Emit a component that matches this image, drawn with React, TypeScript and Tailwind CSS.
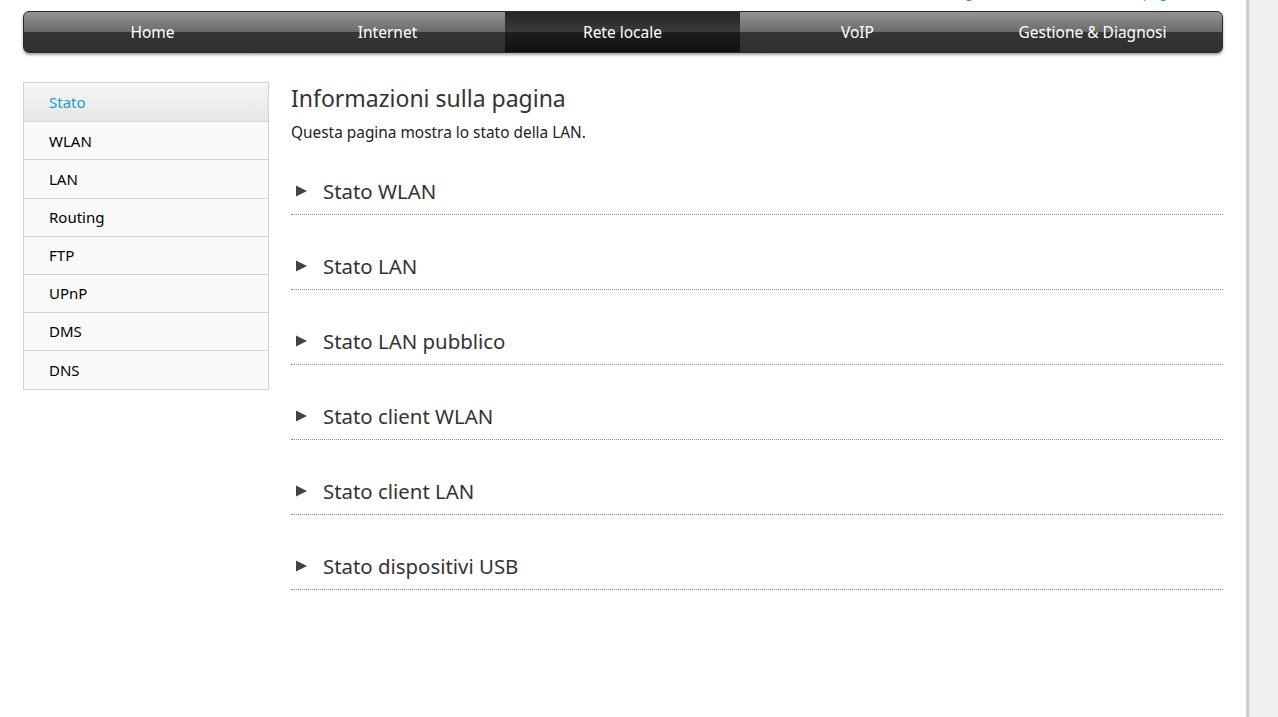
import { useState } from "react";

const tabs = ["Home", "Internet", "Rete locale", "VoIP", "Gestione & Diagnosi"];
const menu = ["Stato", "WLAN", "LAN", "Routing", "FTP", "UPnP", "DMS", "DNS"];
const sections = [
	"Stato WLAN",
	"Stato LAN",
	"Stato LAN pubblico",
	"Stato client WLAN",
	"Stato client LAN",
	"Stato dispositivi USB",
];

function Tab({ label, active }: { label: string; active: boolean }) {
	return (
		<div
			className={
				active
					? "flex h-full w-[235px] items-center justify-center bg-[linear-gradient(#262626_0%,#3a3a3a_50%,#1e1e1e_51%,#101010_100%)] pt-[2px] text-white"
					: "flex h-full w-[235px] items-center justify-center pt-[2px] text-white"
			}
		>
			{label}
		</div>
	);
}

export default function App() {
	const [current, setCurrent] = useState("Stato");
	return (
		<div className="flex min-h-[717px] bg-[#f0f0f0] font-['Noto_Sans',sans-serif]">
			<div className="w-[1246px] shrink-0 bg-white">
				<div className="-mt-[17px] flex h-[18px] justify-end gap-[110px] overflow-hidden pr-[58px] text-[14px] leading-[18px] text-[#1a9bd7]">
					<span>Cambia lingua</span>
					<span>Guida pagina</span>
				</div>
				<nav className="mx-[23px] mt-[10px] flex h-[42px] rounded-[6px] border border-[#2a2a2a] bg-[linear-gradient(#949494_0%,#6a6a6a_50%,#353535_51%,#303030_100%)] px-[11px] text-[15.5px] shadow-[0_2px_3px_rgba(0,0,0,0.35)]">
					{tabs.map((t) => (
						<Tab key={t} label={t} active={t === "Rete locale"} />
					))}
				</nav>
				<div className="mt-[29px] flex px-[23px]">
					<ul className="w-[246px] shrink-0 self-start border border-[#d4d4d4] bg-[#fafafa]">
						{menu.map((m, i) => (
							<li
								key={m}
								onClick={() => setCurrent(m)}
								className={
									(i > 0 ? "border-t border-[#d4d4d4] " : "") +
									(m === current
										? "flex h-[38.2px] cursor-pointer items-center bg-[linear-gradient(#f6f6f6,#e6e6e6)] pl-[25px] text-[15px] text-[#1a9bd7]"
										: "flex h-[38.2px] cursor-pointer items-center pl-[25px] text-[15px] text-black")
								}
							>
								{m}
							</li>
						))}
					</ul>
					<main className="ml-[22px] flex-1">
						<h1 className="mt-[1px] text-[23px] leading-[30px] text-[#333]">
							Informazioni sulla pagina
						</h1>
						<p className="mt-[10px] text-[15.4px] leading-[20px] text-[#222]">
							Questa pagina mostra lo stato della LAN.
						</p>
						<div className="mt-[35px]">
							{sections.map((s) => (
								<div
									key={s}
									className="mb-[38px] flex h-[37px] items-center border-b border-dotted border-[#8a8a8a] pb-[10px]"
								>
									<svg width="12" height="12" viewBox="0 0 12 12" className="ml-[5px]">
										<polygon points="0,0.5 11,6 0,11.5" fill="#444" />
									</svg>
									<span className="ml-[15px] text-[20.4px] text-[#333]">{s}</span>
								</div>
							))}
						</div>
					</main>
				</div>
			</div>
			<div className="w-[4px] bg-[linear-gradient(90deg,#d6d6d6,#c8c8c8,#e4e4e4)]" />
		</div>
	);
}
